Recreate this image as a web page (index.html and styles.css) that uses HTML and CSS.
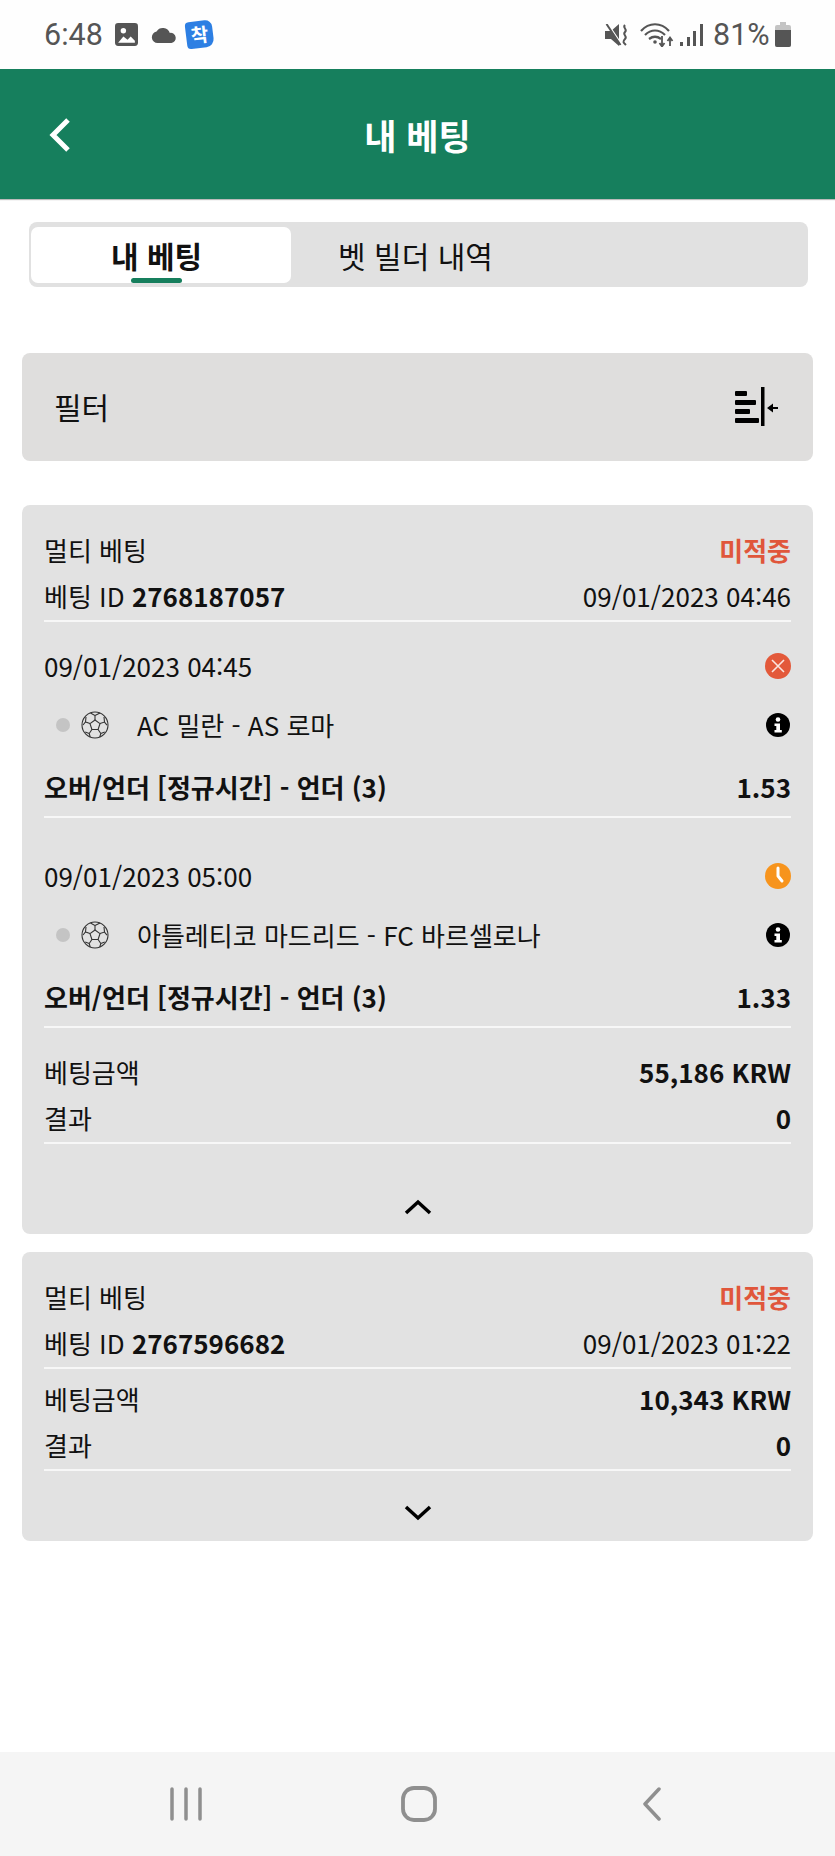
FILE: index.html
```html
<!DOCTYPE html>
<html lang="ko">
<head>
<meta charset="utf-8">
<title>내 베팅</title>
<link rel="stylesheet" href="styles.css">
</head>
<body>
<div class="screen">
  <div class="statusbar">
    <div class="status-left">
      <span class="clock">6:48</span>
      <svg class="ic-image" viewBox="0 0 22 22"><rect width="22" height="22" rx="3" fill="#555"/><path d="M3 19l5-6 4 3 3-3 4 4v2H3z" fill="#fff"/><circle cx="8" cy="7.500" r="2.600" fill="#fff"/></svg>
      <svg class="ic-cloud" viewBox="0 0 24 16"><path d="M6 16a5.500 5.500 0 0 1-1-10.900A7 7 0 0 1 17.500 6.500 4.800 4.800 0 0 1 19 16z" fill="#555"/></svg>
      <span class="ic-badge">착</span>
    </div>
    <div class="status-right">
      <svg class="ic-mute" viewBox="0 0 24 22"><path d="M0 7h6l8-7v22l-8-7H0z" fill="#555"/><path d="M3 0l14 21" stroke="#fff" stroke-width="1.500"/><path d="M1.500 0l14 21" stroke="#555" stroke-width="2"/><path d="M20 1c-3 3 3 4 0 7s3 4 0 7-1 4 1 6" fill="none" stroke="#555" stroke-width="2"/></svg>
      <svg class="ic-wifi" viewBox="0 0 34 24"><g fill="none" stroke="#555" stroke-width="2.200"><path d="M1 8c8-9 20-9 28 0"/><path d="M5 12c6-6 14-6 20 0"/><path d="M9 16c4-3 8-3 12 0"/></g><circle cx="15" cy="19" r="1.800" fill="#555"/><path d="M22 13v10M19.500 20l2.500 3.500 2.500-3.500M30 23v-8M27.500 18l2.500-3.500 2.500 3.500" fill="none" stroke="#555" stroke-width="1.800"/></svg>
      <svg class="ic-signal" viewBox="0 0 23 22"><g fill="#555"><rect x="0" y="18" width="3" height="4"/><rect x="7" y="13" width="3" height="9"/><rect x="13" y="7" width="3" height="15"/><rect x="20" y="0" width="3" height="22"/></g></svg>
      <span class="battery-text">81%</span>
      <svg class="ic-battery" viewBox="0 0 16 25"><path d="M5 0h6v3h3a2 2 0 0 1 2 2v18a2 2 0 0 1-2 2H2a2 2 0 0 1-2-2V5a2 2 0 0 1 2-2h3z" fill="#c4c4c4"/><path d="M0 8h16v15a2 2 0 0 1-2 2H2a2 2 0 0 1-2-2z" fill="#555"/></svg>
    </div>
  </div>

  <header class="appbar">
    <svg class="back" viewBox="0 0 22 36"><path d="M19 3L4 18l15 15" fill="none" stroke="#fff" stroke-width="5"/></svg>
    <h1 class="appbar-title">내 베팅</h1>
  </header>

  <main class="content">
    <div class="tabs">
      <div class="tab tab-active">내 베팅</div>
      <div class="tab">벳 빌더 내역</div>
    </div>

    <div class="filter">
      <span class="filter-label">필터</span>
      <svg class="filter-icon" viewBox="0 0 44 40"><g fill="#000"><rect x="1" y="5" width="12" height="5" rx="1"/><rect x="1" y="14" width="21" height="5" rx="1"/><rect x="1" y="23" width="15" height="5" rx="1"/><rect x="1" y="32" width="24" height="5" rx="1"/><rect x="27" y="1" width="3.500" height="39"/><path d="M33 22l6-4.500v3.500h5v2h-5v3.500z"/></g></svg>
    </div>

    <section class="card">
      <div class="card-head">
        <div class="row"><span>멀티 베팅</span><strong class="lost">미적중</strong></div>
        <div class="row"><span>베팅 ID <strong>2768187057</strong></span><span>09/01/2023 04:46</span></div>
      </div>
      <div class="selection">
        <div class="sel-date"><span>09/01/2023 04:45</span>
          <svg class="status-icon" viewBox="0 0 26 26"><circle cx="13" cy="13" r="13" fill="#e3593a"/><path d="M7 7l12 12M19 7L7 19" stroke="#fbe5df" stroke-width="1.600"/></svg>
        </div>
        <div class="sel-match">
          <span class="dot"></span>
          <svg class="ball" viewBox="0 0 28 28"><use href="#ball"/></svg>
          <span class="teams">AC 밀란 - AS 로마</span>
          <svg class="info" viewBox="0 0 24 24"><use href="#info"/></svg>
        </div>
        <div class="sel-odds"><strong>오버/언더 [정규시간] - 언더 (3)</strong><strong>1.53</strong></div>
      </div>
      <div class="selection">
        <div class="sel-date"><span>09/01/2023 05:00</span>
          <svg class="status-icon" viewBox="0 0 26 26"><circle cx="13" cy="13" r="13" fill="#f7941d"/><path d="M13 5v8l4 5" fill="none" stroke="#fff" stroke-width="3" stroke-linecap="round" stroke-linejoin="round"/></svg>
        </div>
        <div class="sel-match">
          <span class="dot"></span>
          <svg class="ball" viewBox="0 0 28 28"><use href="#ball"/></svg>
          <span class="teams">아틀레티코 마드리드 - FC 바르셀로나</span>
          <svg class="info" viewBox="0 0 24 24"><use href="#info"/></svg>
        </div>
        <div class="sel-odds"><strong>오버/언더 [정규시간] - 언더 (3)</strong><strong>1.33</strong></div>
      </div>
      <div class="summary">
        <div class="row"><span>베팅금액</span><strong>55,186 KRW</strong></div>
        <div class="row row-line"><span>결과</span><strong>0</strong></div>
      </div>
      <div class="card-foot card-foot-open">
        <svg class="chev" viewBox="0 0 28 16"><path d="M2 14L14 3l12 11" fill="none" stroke="#000" stroke-width="3.500"/></svg>
      </div>
    </section>

    <section class="card">
      <div class="card-head">
        <div class="row"><span>멀티 베팅</span><strong class="lost">미적중</strong></div>
        <div class="row"><span>베팅 ID <strong>2767596682</strong></span><span>09/01/2023 01:22</span></div>
      </div>
      <div class="summary">
        <div class="row"><span>베팅금액</span><strong>10,343 KRW</strong></div>
        <div class="row row-line"><span>결과</span><strong>0</strong></div>
      </div>
      <div class="card-foot">
        <svg class="chev" viewBox="0 0 28 16"><path d="M2 2l12 11L26 2" fill="none" stroke="#000" stroke-width="3.500"/></svg>
      </div>
    </section>
  </main>

  <nav class="navbar">
    <svg class="nav-recent" viewBox="0 0 32 34"><path d="M2 2v30M16 2v30M30 2v30" stroke="#8f8f8f" stroke-width="3.500" stroke-linecap="round"/></svg>
    <svg class="nav-home" viewBox="0 0 36 36"><rect x="2" y="2" width="32" height="32" rx="11" fill="none" stroke="#8f8f8f" stroke-width="3.800"/></svg>
    <svg class="nav-back" viewBox="0 0 20 34"><path d="M17 2L3 17l14 15" fill="none" stroke="#8f8f8f" stroke-width="3.500" stroke-linecap="round" stroke-linejoin="round"/></svg>
  </nav>
</div>

<svg class="defs" width="0" height="0">
  <defs>
    <g id="ball" fill="none" stroke="#333" stroke-width="1.100">
      <circle cx="14" cy="14" r="13"/>
      <path d="M14 9l5 3.600-1.900 5.900h-6.200L9 12.600z"/>
      <path d="M14 9V4.500L9.500 2M14 4.500l5-2.500M19 12.600l4.500-1.500 2.500 3M23.500 11l-.5-5M9 12.600L4.500 11 2 14M4.500 11l.5-5M17.100 18.500l2.700 4-1 3.500M19.800 22.500l4-1.500M10.900 18.500l-2.700 4 1 3.500M8.200 22.500l-4-1.500"/>
    </g>
    <g id="info">
      <circle cx="12" cy="12" r="12" fill="#000"/>
      <circle cx="12" cy="6.500" r="2.300" fill="#fff"/>
      <path d="M8.500 10.500H14v6.500h1.800v2.400H8.500V17h1.800v-4.100H8.500z" fill="#fff"/>
    </g>
  </defs>
</svg>
</body>
</html>
```

FILE: styles.css
```css
* { box-sizing: border-box; }
html, body { margin: 0; padding: 0; background: #fff; }
body { font-family: "Noto Sans CJK KR", "Noto Sans", sans-serif; color: #111; }
h1 { margin: 0; }
strong { font-weight: 700; }
.defs { display: block; height: 0; overflow: hidden; }

.screen { width: 835px; height: 1856px; display: flex; flex-direction: column; overflow: hidden; }

.statusbar { height: 69px; display: flex; justify-content: space-between; align-items: center; padding: 0 44px 0 44px; background: #fefefe; color: #555; font-family: Roboto, sans-serif; font-size: 30.500px; }
.status-left, .status-right { display: flex; align-items: center; }
.clock { width: 71px; }
.ic-image { width: 23px; height: 23px; margin-right: 13px; }
.ic-cloud { width: 26px; height: 17px; margin-right: 9px; }
.ic-badge { width: 27px; height: 27px; background: #2d7fe3; color: #fff; border-radius: 4px 7px 8px 4px; font: 700 19px/26px "Noto Sans CJK KR", sans-serif; text-align: center; transform: rotate(-7deg); }
.ic-mute { width: 24px; height: 22px; margin-right: 11px; }
.ic-wifi { width: 34px; height: 24px; margin-right: 6px; }
.ic-signal { width: 23px; height: 22px; margin-right: 10px; }
.battery-text { width: 62px; }
.ic-battery { width: 16px; height: 25px; }

.appbar { height: 130px; background: #167f5d; display: flex; align-items: center; justify-content: center; position: relative; box-shadow: 0 1px 1px #bbb; }
.back { position: absolute; left: 49px; top: 48px; width: 22px; height: 36px; }
.appbar-title { color: #fff; font-size: 35px; font-weight: 700; line-height: 1; }

.content { flex: 1; padding: 23px 22px 0; }

.tabs { margin: 0 5px 0 7px; height: 65px; background: #e1e1e1; border-radius: 8px; padding: 5px 2px 4px; display: flex; }
.tab { width: 260px; display: flex; align-items: center; justify-content: center; font-size: 30px; line-height: 1; padding-right: 9px; }
.tab:last-child { width: 249px; padding-right: 0; }
.tab-active { background: #fff; border-radius: 7px; font-weight: 700; position: relative; }
.tab-active::after { content: ""; position: absolute; left: 100px; bottom: 0; width: 51px; height: 5px; background: #167f5d; border-radius: 3px; }

.filter { margin-top: 66px; height: 108px; background: #dfdedd; border-radius: 8px; display: flex; align-items: center; justify-content: space-between; padding: 0 35px 2px 32px; }
.filter-label { font-size: 30px; line-height: 1; }
.filter-icon { width: 44px; height: 40px; }

.card { margin-top: 18px; background: #e2e2e2; border-radius: 8px; padding: 23px 22px 0; font-size: 26px; line-height: 1; }
.filter + .card { margin-top: 44px; }

.row { height: 47px; display: flex; align-items: center; justify-content: space-between; padding-bottom: 3px; }
.card-head .row:last-child, .row-line { border-bottom: 2px solid #f7f7f7; }
.lost { color: #e0563b; }

.selection { height: 196px; margin-bottom: 14px; border-bottom: 2px solid #f7f7f7; padding-top: 20px; display: flex; flex-direction: column; }
.selection:last-of-type { margin-bottom: 13px; }
.sel-date { height: 48px; display: flex; align-items: center; justify-content: space-between; }
.status-icon { width: 26px; height: 26px; margin-top: -1px; }
.sel-match { height: 69px; display: flex; align-items: center; }
.dot { width: 14px; height: 14px; border-radius: 50%; background: #c4c4c4; margin-left: 12px; }
.ball { width: 28px; height: 28px; margin-left: 11px; }
.teams { margin-left: 28px; flex: 1; }
.info { width: 24px; height: 24px; margin-right: 1px; }
.sel-odds { height: 56px; display: flex; align-items: center; justify-content: space-between; }

.summary { padding-top: 8px; }
.card-foot { height: 70px; display: flex; align-items: center; justify-content: center; padding-top: 14px; }
.card-foot-open { height: 90px; padding-top: 35px; }
.chev { width: 28px; height: 16px; }

.navbar { height: 104px; background: #f5f5f5; position: relative; display: flex; align-items: center; padding: 0 0 0 170px; }
.nav-recent { width: 32px; height: 34px; }
.nav-home { width: 36px; height: 36px; margin-left: 199px; }
.nav-back { width: 20px; height: 34px; margin-left: 205px; }
```
